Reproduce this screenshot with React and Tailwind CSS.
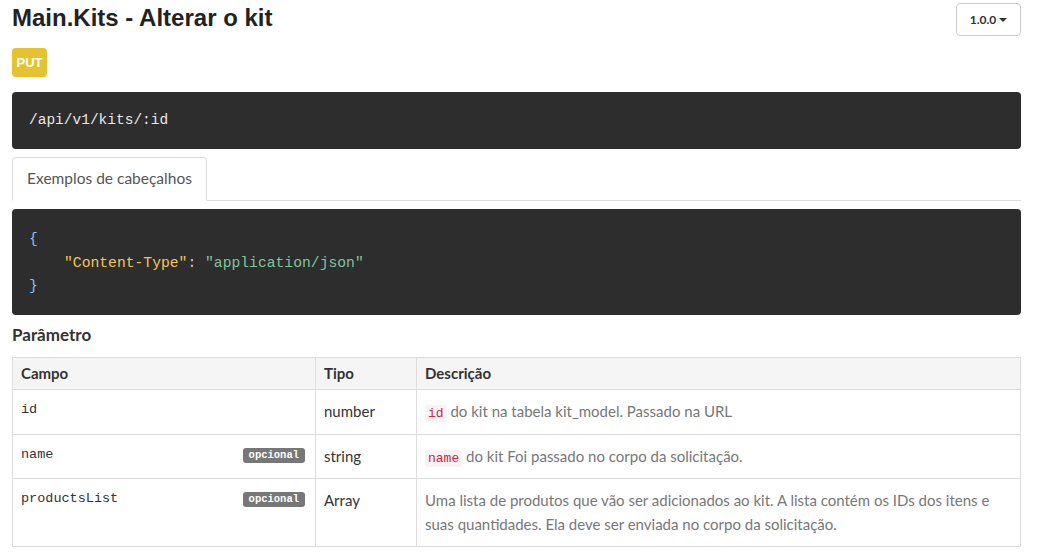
export default function App() {
  const sans = { fontFamily: "Lato, 'Noto Sans', sans-serif" };
  const mono = { fontFamily: "'Liberation Mono', monospace" };
  return (
    <div className="bg-white min-h-[559px] pl-3 pr-4 text-[#333]" style={sans}>
      <div className="flex items-start justify-between pt-[3px]">
        <h1 className="text-[24px] font-bold leading-[28px] mt-[1px] text-[#222]" style={{ fontFamily: "'Liberation Sans', Arial, sans-serif" }}>
          Main.Kits - Alterar o kit
        </h1>
        <button className="h-[33px] w-[65px] border border-[#ccc] rounded-[4px] flex items-center justify-center gap-[3px] text-[12px] font-bold text-[#333]">
          1.0.0
          <svg width="8" height="4" viewBox="0 0 8 4"><path d="M0 0h8L4 4z" fill="#333" /></svg>
        </button>
      </div>
      <div className="mt-[12px] w-[35px] h-[29px] rounded-[4px] bg-[#e5c22f] text-white text-[13px] font-bold flex items-center justify-center" style={{ fontFamily: "'Liberation Sans', Arial, sans-serif" }}>
        PUT
      </div>
      <div className="mt-[15px] h-[57px] bg-[#2d2d2d] rounded-[4px] flex items-center pl-[17px] text-[#e8e8e8] text-[14.5px]" style={mono}>
        /api/v1/kits/:id
      </div>
      <div className="mt-[8px] flex border-b border-[#ddd]">
        <div className="w-[195px] h-[44px] border border-[#ddd] border-b-white -mb-px rounded-t-[4px] bg-white flex items-center justify-center text-[15.5px] text-[#555]">
          Exemplos de cabeçalhos
        </div>
      </div>
      <div className="mt-[8px] h-[106px] bg-[#2d2d2d] rounded-[4px] pl-[17px] pt-[19px] text-[14.7px] leading-[23.5px]" style={mono}>
        <div className="text-[#8cc4ef]">{"{"}</div>
        <div className="pl-[35px]">
          <span className="text-[#f6c456]">"Content-Type"</span>
          <span className="text-[#ccc]">: </span>
          <span className="text-[#7ec699]">"application/json"</span>
        </div>
        <div className="text-[#8cc4ef]">{"}"}</div>
      </div>
      <h2 className="mt-[9px] text-[17px] font-bold leading-[22px] text-[#333]">Parâmetro</h2>
      <table className="mt-[11px] w-full border-collapse text-[15px]">
        <thead>
          <tr className="bg-[#f5f5f5] h-[32px]">
            <th className="border border-[#ddd] text-left font-bold px-[8px] w-[303px]">Campo</th>
            <th className="border border-[#ddd] text-left font-bold px-[8px] w-[101px]">Tipo</th>
            <th className="border border-[#ddd] text-left font-bold px-[8px]">Descrição</th>
          </tr>
        </thead>
        <tbody>
          <tr className="h-[45px]">
            <td className="border border-[#ddd] px-[8px] align-top pt-[10px] text-[13.5px]" style={mono}>id</td>
            <td className="border border-[#ddd] px-[8px] align-top pt-[10px]">number</td>
            <td className="border border-[#ddd] px-[8px] align-top pt-[10px] text-[#777]">
              <code className="bg-[#f9f2f4] text-[#c7254e] px-[3px] py-[1px] rounded-[3px] text-[13px]" style={mono}>id</code> do kit na tabela kit_model. Passado na URL
            </td>
          </tr>
          <tr className="h-[44px]">
            <td className="border border-[#ddd] px-[8px] align-top pt-[10px] text-[13.5px]" style={mono}>
              <div className="flex items-center justify-between">
                <span>name</span>
                <span className="bg-[#777] text-white text-[10.5px] font-bold px-[6px] h-[15px] leading-[15px] rounded-[3px] mr-[2px]">opcional</span>
              </div>
            </td>
            <td className="border border-[#ddd] px-[8px] align-top pt-[10px]">string</td>
            <td className="border border-[#ddd] px-[8px] align-top pt-[10px] text-[#777]">
              <code className="bg-[#f9f2f4] text-[#c7254e] px-[3px] py-[1px] rounded-[3px] text-[13px]" style={mono}>name</code> do kit Foi passado no corpo da solicitação.
            </td>
          </tr>
          <tr className="h-[68px]">
            <td className="border border-[#ddd] px-[8px] align-top pt-[10px] text-[13.5px]" style={mono}>
              <div className="flex items-center justify-between">
                <span>productsList</span>
                <span className="bg-[#777] text-white text-[10.5px] font-bold px-[6px] h-[15px] leading-[15px] rounded-[3px] mr-[2px]">opcional</span>
              </div>
            </td>
            <td className="border border-[#ddd] px-[8px] align-top pt-[10px]">Array</td>
            <td className="border border-[#ddd] px-[8px] align-top pt-[9px] pb-[10px] text-[#777] leading-[24px]">
              Uma lista de produtos que vão ser adicionados ao kit. A lista contém os IDs dos itens e suas quantidades. Ela deve ser enviada no corpo da solicitação.
            </td>
          </tr>
        </tbody>
      </table>
    </div>
  );
}
